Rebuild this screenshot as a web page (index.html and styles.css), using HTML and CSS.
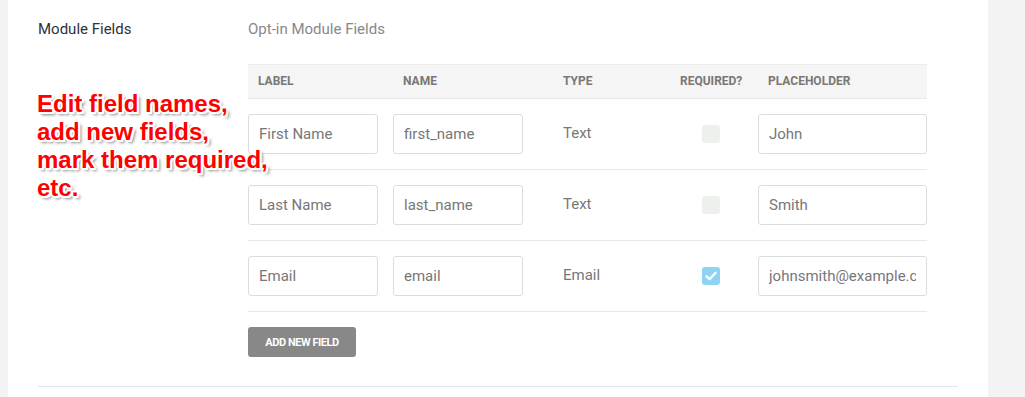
FILE: index.html
```html
<!DOCTYPE html>
<html lang="en">
<head>
    <meta charset="UTF-8">
    <meta name="viewport" content="width=device-width, initial-scale=1.0">
    <title>Module Fields</title>
    <link rel="stylesheet" href="styles.css">
</head>
<body>
    <div class="page">
        <div class="panel">
            <div class="setting">
                <div class="setting-label">Module Fields</div>

                <div class="setting-body">
                    <div class="setting-title">Opt-in Module Fields</div>

                    <div class="fields">
                        <div class="fields-head">
                            <div class="col">Label</div>
                            <div class="col">Name</div>
                            <div class="col">Type</div>
                            <div class="col">Required?</div>
                            <div class="col">Placeholder</div>
                        </div>

                        <div class="fields-row">
                            <div class="col"><input type="text" class="field-input" value="First Name"></div>
                            <div class="col"><input type="text" class="field-input" value="first_name"></div>
                            <div class="col col-type">Text</div>
                            <div class="col col-check"><span class="check"></span></div>
                            <div class="col"><input type="text" class="field-input wide" value="John"></div>
                        </div>

                        <div class="fields-row">
                            <div class="col"><input type="text" class="field-input" value="Last Name"></div>
                            <div class="col"><input type="text" class="field-input" value="last_name"></div>
                            <div class="col col-type">Text</div>
                            <div class="col col-check"><span class="check"></span></div>
                            <div class="col"><input type="text" class="field-input wide" value="Smith"></div>
                        </div>

                        <div class="fields-row">
                            <div class="col"><input type="text" class="field-input" value="Email"></div>
                            <div class="col"><input type="text" class="field-input" value="email"></div>
                            <div class="col col-type">Email</div>
                            <div class="col col-check">
                                <span class="check checked">
                                    <svg viewBox="0 0 18 18" width="18" height="18">
                                        <path d="M4.5 9.3 L7.6 12.2 L13.6 5.8" fill="none" stroke="#fff" stroke-width="2.4" stroke-linecap="round" stroke-linejoin="round"/>
                                    </svg>
                                </span>
                            </div>
                            <div class="col"><input type="text" class="field-input wide" value="johnsmith@example.com"></div>
                        </div>
                    </div>

                    <button type="button" class="btn-add">Add New Field</button>
                </div>
            </div>

            <!-- подпись поверх формы -->
            <div class="callout">Edit field names,<br>add new fields,<br>mark them required,<br>etc.</div>
        </div>
    </div>
</body>
</html>
```

FILE: styles.css
```css
* {
    margin: 0;
    padding: 0;
    box-sizing: border-box;
}

body {
    background: #f3f3f3;
    font-family: Roboto, 'Noto Sans', sans-serif;
    overflow: hidden;
}

.page {
    display: flex;
    padding-left: 8px;
    height: 100vh;
}

.panel {
    position: relative;
    width: 980px;
    background: white;
    padding: 19px 30px 0;
}

.setting {
    display: flex;
    padding-bottom: 29px;
    border-bottom: 1px solid #e6e6e6;
}

.setting-label {
    width: 210px;
    font-size: 15px;
    line-height: 20px;
    color: #2c3338;
}

.setting-title {
    font-size: 15px;
    line-height: 20px;
    color: #888;
    margin-bottom: 25px;
}

.fields {
    width: 679px;
}

.fields-head,
.fields-row {
    display: grid;
    grid-template-columns: 145px 160px 117px 88px 169px;
    align-items: center;
}

.fields-head {
    background: #f5f5f5;
    border-top: 1px solid #ebebeb;
    border-bottom: 1px solid #e8e8e8;
}

.fields-head .col {
    padding: 9px 10px;
    font-size: 12px;
    line-height: 15px;
    font-weight: 700;
    text-transform: uppercase;
    color: #7a7774;
}

.fields-row {
    padding: 15px 0;
    border-bottom: 1px solid #e8e8e8;
}

.field-input {
    display: block;
    width: 130px;
    height: 40px;
    padding: 0 10px;
    border: 1px solid #dcdcdc;
    border-radius: 3px;
    font-family: Roboto, 'Noto Sans', sans-serif;
    font-size: 15px;
    color: #777;
    background: white;
    outline: none;
}

.field-input.wide {
    width: 169px;
}

.col-type {
    padding-left: 10px;
    padding-bottom: 2px;
    font-size: 15px;
    color: #777;
}

.col-check {
    padding-left: 32px;
    display: flex;
}

.check {
    display: block;
    width: 18px;
    height: 18px;
    border-radius: 3px;
    background: #eef0ee;
}

.check.checked {
    background: #8fd3f2;
}

.check svg {
    display: block;
}

.btn-add {
    display: block;
    margin-top: 15px;
    width: 108px;
    height: 30px;
    border: none;
    border-radius: 3px;
    background: #888;
    color: white;
    font-family: Roboto, 'Noto Sans', sans-serif;
    font-size: 11px;
    font-weight: 700;
    letter-spacing: -0.45px;
    text-transform: uppercase;
    cursor: pointer;
}

.callout {
    position: absolute;
    top: 90px;
    left: 29px;
    font-family: 'Liberation Sans', Arial, sans-serif;
    font-size: 24px;
    line-height: 28px;
    font-weight: 700;
    color: #ff0000;
    text-shadow:
        -1px -1px 0 #fff, 1px -1px 0 #fff, -1px 1px 0 #fff, 1px 1px 0 #fff,
        0 -2px 0 #fff, 0 2px 0 #fff, -2px 0 0 #fff, 2px 0 0 #fff,
        2px 2px 0 #fff, 3px 3px 3px rgba(0, 0, 0, 0.5);
}
```
